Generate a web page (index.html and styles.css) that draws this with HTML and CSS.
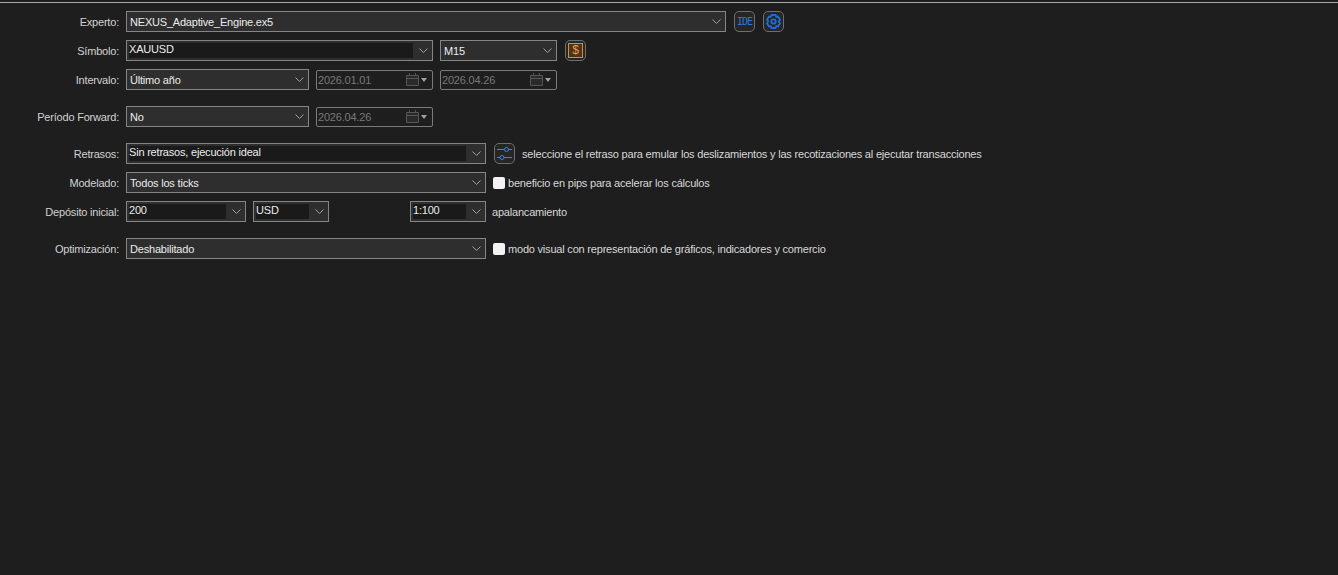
FILE: index.html
```html
<!DOCTYPE html>
<html lang="es">
<head>
<meta charset="utf-8">
<title>Probador de estrategias</title>
<link rel="stylesheet" href="styles.css">
</head>
<body>
<svg class="defs" width="0" height="0" aria-hidden="true">
  <symbol id="chev" viewBox="0 0 9 5"><path d="M.5.5 4.500 4.500 8.500.5" fill="none" stroke="currentColor" stroke-width="1"/></symbol>
  <symbol id="cal" viewBox="0 0 13 13"><path d="M.5 2.500h12v10H.5z" fill="#2a2a2a" stroke="currentColor"/><path d="M.5 5.500h12M3.500 0v3M9.500 0v3" fill="none" stroke="currentColor"/></symbol>
</svg>
<main class="form">
  <div class="row">
    <label class="label">Experto:</label>
    <div class="combo w600"><span class="value">NEXUS_Adaptive_Engine.ex5</span><svg class="chev"><use href="#chev"/></svg></div>
    <button class="icon-btn ml8"><span class="ide">IDE</span></button>
    <button class="icon-btn ml8">
      <svg width="15" height="15" viewBox="0 0 15 15" fill="none" stroke="#1c6ed6" stroke-width="1.800"><path d="M5.500 1h4l.7 1.800 1.900-.3L14 5.800l-1.200 1.700L14 9.200l-1.900 3.300-1.900-.3-.7 1.800h-4l-.7-1.800-1.900.3L1 9.200l1.200-1.700L1 5.800l1.900-3.300 1.900.3z"/><circle cx="7.500" cy="7.500" r="2.200"/></svg>
    </button>
  </div>
  <div class="row">
    <label class="label">Símbolo:</label>
    <div class="combo edit w307"><span class="field">XAUUSD</span><svg class="chev"><use href="#chev"/></svg></div>
    <div class="combo w117 ml7"><span class="value">M15</span><svg class="chev"><use href="#chev"/></svg></div>
    <button class="icon-btn ml8"><span class="dollar">$</span></button>
  </div>
  <div class="row section-end">
    <label class="label">Intervalo:</label>
    <div class="combo w183"><span class="value">Último año</span><svg class="chev"><use href="#chev"/></svg></div>
    <div class="date ml7"><span class="date-text">2026.01.01</span><svg class="cal"><use href="#cal"/></svg><i class="tri"></i></div>
    <div class="date ml7"><span class="date-text">2026.04.26</span><svg class="cal"><use href="#cal"/></svg><i class="tri"></i></div>
  </div>
  <div class="row section-end">
    <label class="label">Período Forward:</label>
    <div class="combo w183"><span class="value">No</span><svg class="chev"><use href="#chev"/></svg></div>
    <div class="date ml7"><span class="date-text">2026.04.26</span><svg class="cal"><use href="#cal"/></svg><i class="tri"></i></div>
  </div>
  <div class="row">
    <label class="label">Retrasos:</label>
    <div class="combo edit w360"><span class="field">Sin retrasos, ejecución ideal</span><svg class="chev"><use href="#chev"/></svg></div>
    <button class="icon-btn ml8">
      <svg width="15" height="13" viewBox="0 0 15 13" fill="none" stroke="#2f86ee"><path d="M0 2.500h15M0 10.500h15"/><circle cx="9.500" cy="2.500" r="2" fill="#262626"/><circle cx="5" cy="10.500" r="2" fill="#262626"/></svg>
    </button>
    <span class="note ml7">seleccione el retraso para emular los deslizamientos y las recotizaciones al ejecutar transacciones</span>
  </div>
  <div class="row">
    <label class="label">Modelado:</label>
    <div class="combo w360"><span class="value">Todos los ticks</span><svg class="chev"><use href="#chev"/></svg></div>
    <span class="check ml7"></span><span class="note ml3">beneficio en pips para acelerar los cálculos</span>
  </div>
  <div class="row section-end">
    <label class="label">Depósito inicial:</label>
    <div class="combo edit w120"><span class="field">200</span><svg class="chev"><use href="#chev"/></svg></div>
    <div class="combo edit w76 ml7"><span class="field">USD</span><svg class="chev"><use href="#chev"/></svg></div>
    <div class="combo edit w76 ml81"><span class="field">1:100</span><svg class="chev"><use href="#chev"/></svg></div>
    <span class="note ml6">apalancamiento</span>
  </div>
  <div class="row">
    <label class="label">Optimización:</label>
    <div class="combo w360"><span class="value">Deshabilitado</span><svg class="chev"><use href="#chev"/></svg></div>
    <span class="check ml7"></span><span class="note ml3">modo visual con representación de gráficos, indicadores y comercio</span>
  </div>
</main>
</body>
</html>
```
FILE: styles.css
```css
* { box-sizing: border-box; }
html, body { height: 100%; }
body {
  margin: 0;
  overflow: hidden;
  background: #1e1e1e;
  border-top: 2px solid #1e1e1e;
  font: 11px/14px "Liberation Sans", Arial, sans-serif;
  letter-spacing: -.2px;
  color: #dcdcdc;
}
body::before {
  content: "";
  display: block;
  height: 1px;
  background: #a9a9a9;
}
.defs { position: absolute; }
.form { display: flex; flex-direction: column; padding-top: 8px; }
.row { display: flex; align-items: center; height: 21px; margin-bottom: 8px; }
.section-end { margin-bottom: 16px; }
.label { width: 119px; margin-right: 7px; text-align: right; color: #d2d2d2; white-space: nowrap; }
.combo {
  display: flex;
  align-items: center;
  height: 21px;
  flex: none;
  border: 1px solid #858585;
  background: #2e2e2e;
  color: #ececec;
}
.value { flex: 1; padding-left: 3px; white-space: nowrap; }
.field {
  flex: 1;
  align-self: stretch;
  margin: 2px 0 2px 2px;
  background: #1a1a1a;
  line-height: 13px;
  white-space: nowrap;
}
.chev { width: 9px; height: 5px; margin: 0 4px 0 6px; flex: none; color: #a0a0a0; }
.w600 { width: 600px; }
.w360 { width: 360px; }
.w307 { width: 307px; }
.w183 { width: 183px; }
.w120 { width: 120px; }
.w117 { width: 117px; }
.w76 { width: 76px; }
.ml3 { margin-left: 3px; }
.ml6 { margin-left: 6px; }
.ml7 { margin-left: 7px; }
.ml8 { margin-left: 8px; }
.ml81 { margin-left: 81px; }
.date {
  display: flex;
  align-items: center;
  width: 117px;
  height: 20px;
  flex: none;
  padding: 0 5px 0 1px;
  border: 1px solid #7a7a7a;
  border-radius: 2px;
  color: #767a7d;
}
.date-text { flex: 1; white-space: nowrap; }
.cal { width: 13px; height: 13px; color: #565656; flex: none; }
.tri {
  width: 0;
  height: 0;
  margin-left: 2px;
  border: 3.5px solid transparent;
  border-top: 4px solid #a0a0a0;
  border-bottom: 0;
}
.icon-btn {
  display: flex;
  align-items: center;
  justify-content: center;
  width: 21px;
  height: 21px;
  flex: none;
  padding: 0;
  border: 1px solid #6e6e6e;
  border-radius: 5px;
  background: #262626;
}
.ide { font: 10px/12px "DejaVu Sans Mono", monospace; letter-spacing: -1px; color: #2a78dc; }
.dollar {
  display: block;
  width: 15px;
  height: 15px;
  border: 1px solid #e08a2a;
  background: #4a3320;
  color: #ee9a3c;
  font: 12px/13px "Liberation Sans", sans-serif;
  letter-spacing: 0;
  text-align: center;
}
.note { color: #d8d8d8; white-space: nowrap; }
.check {
  width: 12px;
  height: 12px;
  flex: none;
  background: #f2f2f2;
  border-radius: 2px;
}
```
